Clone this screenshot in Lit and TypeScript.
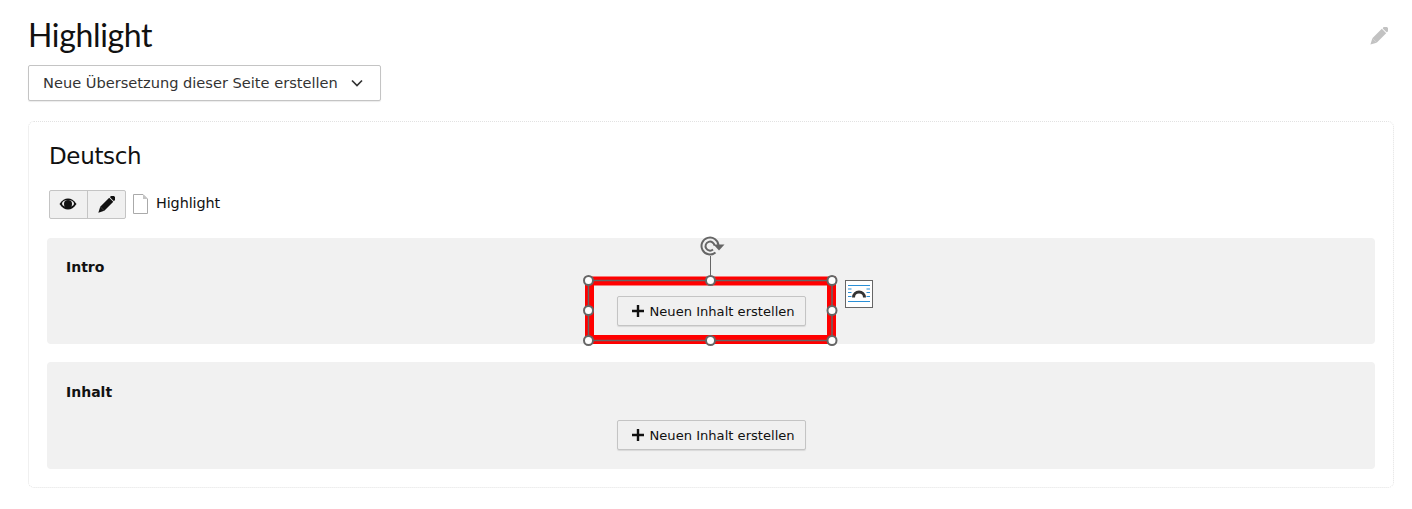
import { LitElement, html, svg, css } from "lit";
import { customElement } from "lit/decorators.js";

const addBtn = html`<button class="add"><svg width="14" height="14" viewBox="0 0 14 14"><path d="M5.800 1h2.400v4.800H13v2.400H8.200V13H5.800V8.200H1V5.800h4.800z" fill="#111"/></svg><span>Neuen Inhalt erstellen</span></button>`;

const pencil = (color: string, size: number) => html`<svg class="pen" width="${size}" height="${size}" viewBox="0 0 17 17"><g transform="rotate(45 8.5 8.5)" fill="${color}"><rect x="5.600" y="-2.800" width="5.800" height="3.800" rx="1"/><rect x="5.600" y="1.800" width="5.800" height="12.700"/><path d="M5.600 14.500h5.800L8.500 20z"/></g></svg>`;

const handles = [[12.5, 42.5], [134.5, 42.5], [256, 42.5], [12.5, 72.5], [256, 72.5], [12.5, 102.5], [134.5, 102.5], [256, 102.5]];

@customElement("app-root")
export class AppRoot extends LitElement {
  static styles = css`
    :host { display: block; width: 1412px; height: 509px; background: #fff; overflow: hidden; font-family: "DejaVu Sans", Verdana, sans-serif; color: #111; box-sizing: border-box; padding: 0 18px 0 28px; }
    .top { display: flex; justify-content: space-between; height: 65px; }
    h1 { margin: 0; padding-top: 15px; font: 400 32px/40px Lato, "Noto Sans", sans-serif; letter-spacing: -0.35px; color: #111; }
    .top svg { margin: 27px 6px 0 0; }
    .select { display: flex; align-items: center; box-sizing: border-box; width: 353px; height: 36px; padding: 0 16px 0 14px; border: 1px solid #c4c4c4; border-radius: 2px; background: #fff; font-size: 14.6px; color: #333; justify-content: space-between; box-shadow: 0 1px 1px rgba(0,0,0,.08); }
    .select span { padding-bottom: 2px; }
    .card { box-sizing: border-box; margin-top: 20px; height: 367px; border: 1px dotted #e2e2e2; border-radius: 6px; padding: 0 18px; }
    h2 { margin: 0; padding: 19px 0 0 2px; font: 400 23px/30px "DejaVu Sans", sans-serif; letter-spacing: -0.35px; height: 30px; box-sizing: content-box; }
    .meta { display: flex; align-items: center; gap: 7px; margin: 18px 0 0 2px; height: 30px; font-size: 14.4px; }
    .group { display: flex; height: 29px; border: 1px solid #c4c4c4; border-radius: 2px; box-sizing: border-box; background: #f0f0f0; }
    .group div { box-sizing: border-box; width: 37px; padding-right: 2px; display: flex; align-items: center; justify-content: center; }
    .group div + div { width: 38px; padding-right: 1px; border-left: 1px solid #c4c4c4; }
    .name { letter-spacing: -0.1px; margin-left: 1px; padding-bottom: 2px; }
    .panel { position: relative; box-sizing: border-box; background: #f1f1f1; border-radius: 4px; height: 106px; padding: 21px 18px 0 19px; margin-top: 19px; }
    .panel + .panel { height: 107px; margin-top: 18px; padding-top: 22px; }
    .label { font-size: 14px; font-weight: 700; line-height: 17px; }
    .center { display: flex; justify-content: center; margin-top: 20px; margin-left: -1px; }
    .panel + .panel .center { margin-top: 19px; }
    .add { display: flex; align-items: center; gap: 5px; box-sizing: border-box; width: 189px; height: 30px; padding: 0 0 0 13px; background: #f0f0f0; border: 1px solid #c4c4c4; border-radius: 2px; font: 400 13.1px "DejaVu Sans", sans-serif; color: #111; box-shadow: 0 1px 1px rgba(0,0,0,.1); }
    .overlay { position: absolute; left: 529px; top: 0; overflow: visible; pointer-events: none; }
  `;

  render() {
    return html`
      <div class="top">
        <h1>Highlight</h1>
        ${pencil("#c2c2c2", 18)}
      </div>
      <div class="select"><span>Neue Übersetzung dieser Seite erstellen</span>
        <svg width="14" height="14" viewBox="0 0 14 14"><path d="M2 4.500l5 5 5-5" fill="none" stroke="#333" stroke-width="1.700"/></svg>
      </div>
      <div class="card">
        <h2>Deutsch</h2>
        <div class="meta">
          <div class="group">
            <div><svg width="18" height="12" viewBox="0 0 18 12"><path d="M0.500 6C3 2 6 .5 9 .5S15 2 17.500 6C15 10 12 11.500 9 11.500S3 10 .5 6z" fill="#111"/><ellipse cx="9" cy="5.500" rx="6" ry="3.600" fill="#eee"/><circle cx="9" cy="6" r="4" fill="#111"/></svg></div>
            <div>${pencil("#111", 17)}</div>
          </div>
          <svg width="15" height="20" viewBox="0 0 15 20"><path d="M.5 .5h9.500l4.500 4.500v14.500H.5z" fill="#fff" stroke="#aaa"/><path d="M10 .5V5h4.500z" fill="#c4c4c4"/></svg>
          <span class="name">Highlight</span>
        </div>
        <div class="panel">
          <div class="label">Intro</div>
          <div class="center">${addBtn}</div>
          <svg class="overlay" width="300" height="116" viewBox="0 0 300 116">
            <rect x="13.500" y="43" width="242" height="58.500" fill="none" stroke="#f00" stroke-width="9"/>
            <rect x="12.500" y="42.500" width="243.500" height="60" fill="none" stroke="#666" stroke-width="1.500"/>
            <line x1="134.500" y1="18" x2="134.500" y2="43" stroke="#666" stroke-width="1"/>
            <path d="M139.500 14.500A8.500 8.500 0 1 1 142.500 7.300" fill="none" stroke="#666" stroke-width="2"/>
            <path d="M137 11.500A4.500 4.500 0 1 1 138.500 7.600" fill="none" stroke="#666" stroke-width="2"/>
            <path d="M137.500 6.500h11l-5.500 6z" fill="#666"/>
            ${handles.map(([x, y]) => svg`<circle cx="${x}" cy="${y}" r="4.500" fill="#fff" stroke="#666" stroke-width="2"></circle>`)}
            <rect x="269.500" y="42.500" width="27" height="27" fill="#fff" stroke="#666"/>
            <path d="M272 47.500h22M272 63.500h22M272 51h3.500M290.500 51h3.500M272 54.500h3.500M290.500 54.500h3.500M272 58.500h3.500M290.500 58.500h3.500" stroke="#2a8fd6" stroke-width="1" fill="none"/>
            <path d="M277.500 59.500a5.500 5.500 0 0 1 11 0" fill="none" stroke="#333" stroke-width="3"/>
          </svg>
        </div>
        <div class="panel">
          <div class="label">Inhalt</div>
          <div class="center">${addBtn}</div>
        </div>
      </div>
    `;
  }
}
